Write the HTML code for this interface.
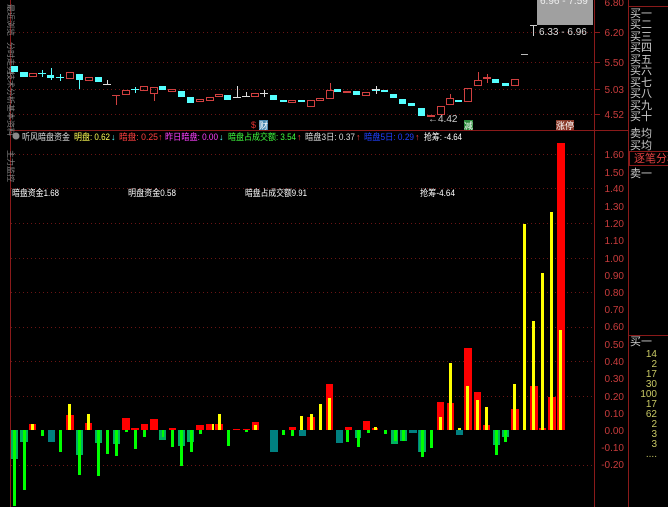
<!DOCTYPE html>
<html><head><meta charset="utf-8"><style>
html,body{margin:0;padding:0;background:#000;width:668px;height:507px;overflow:hidden}
svg{display:block}
text{font-family:"Liberation Sans","Noto Sans CJK SC",sans-serif;font-size:10px}
</style></head><body>
<svg width="668" height="507" xmlns="http://www.w3.org/2000/svg">
<rect width="668" height="507" fill="#000"/>
<g stroke="#8a1a1a" stroke-width="1">
<line x1="10.5" y1="0" x2="10.5" y2="507"/>
<line x1="594.5" y1="0" x2="594.5" y2="507"/>
<line x1="628.5" y1="0" x2="628.5" y2="507"/>
<line x1="10" y1="130.5" x2="628" y2="130.5"/>
<line x1="628" y1="6.5" x2="668" y2="6.5"/>
<line x1="628" y1="335.5" x2="668" y2="335.5"/>
</g>
<g stroke="#6a1515" stroke-width="1" stroke-dasharray="1,3">
<line x1="11" y1="32.5" x2="594" y2="32.5"/>
<line x1="11" y1="62.5" x2="594" y2="62.5"/>
<line x1="11" y1="89.5" x2="594" y2="89.5"/>
<line x1="11" y1="114.5" x2="594" y2="114.5"/>
<line x1="11" y1="154.5" x2="594" y2="154.5"/>
<line x1="11" y1="188.5" x2="594" y2="188.5"/>
<line x1="11" y1="223.5" x2="594" y2="223.5"/>
<line x1="11" y1="258.5" x2="594" y2="258.5"/>
<line x1="11" y1="292.5" x2="594" y2="292.5"/>
<line x1="11" y1="327.5" x2="594" y2="327.5"/>
<line x1="11" y1="361.5" x2="594" y2="361.5"/>
<line x1="11" y1="396.5" x2="594" y2="396.5"/>
<line x1="11" y1="465.5" x2="594" y2="465.5"/>
</g>
<g stroke="#8a1a1a"><line x1="594" y1="32.5" x2="600" y2="32.5"/><line x1="594" y1="62.5" x2="600" y2="62.5"/><line x1="594" y1="89.5" x2="600" y2="89.5"/><line x1="594" y1="114.5" x2="600" y2="114.5"/></g>
<g fill="#888">
<text transform="translate(8,4) rotate(90)" style="font-size:8px">最近浏览</text>
<text transform="translate(8,42) rotate(90)" style="font-size:8px">分时走势</text>
<text transform="translate(8,72) rotate(90)" style="font-size:8px">技术分析</text>
<text transform="translate(8,104) rotate(90)" style="font-size:8px">基本资料</text>
<text transform="translate(8,150) rotate(90)" style="font-size:8px">主力监控</text>
</g>
<g fill="#c83c3c" text-anchor="end">
<text x="624" y="6">6.80</text>
<text x="624" y="36">6.20</text>
<text x="624" y="66">5.50</text>
<text x="624" y="93">5.03</text>
<text x="624" y="118">4.52</text>
<text x="624" y="158">1.60</text>
<text x="624" y="176">1.50</text>
<text x="624" y="192">1.40</text>
<text x="624" y="210">1.30</text>
<text x="624" y="227">1.20</text>
<text x="624" y="244">1.10</text>
<text x="624" y="262">1.00</text>
<text x="624" y="279">0.90</text>
<text x="624" y="296">0.80</text>
<text x="624" y="313">0.70</text>
<text x="624" y="330">0.60</text>
<text x="624" y="348">0.50</text>
<text x="624" y="365">0.40</text>
<text x="624" y="382">0.30</text>
<text x="624" y="400">0.20</text>
<text x="624" y="417">0.10</text>
<text x="624" y="434">0.00</text>
<text x="624" y="451">-0.10</text>
<text x="624" y="468">-0.20</text>
</g>
<rect x="537" y="0" width="56" height="25" fill="#a0a0a0"/>
<text x="540" y="4" fill="#eee">6.96 - 7.59</text>
<line x1="533.5" y1="25" x2="533.5" y2="36" stroke="#ccc"/>
<line x1="530" y1="25.5" x2="537" y2="25.5" stroke="#ccc"/>
<text x="539" y="35" fill="#ddd">6.33 - 6.96</text>
<line x1="521" y1="54.5" x2="528" y2="54.5" stroke="#bbb"/>
<g fill="#55ffff">
<rect x="11" y="66" width="7" height="6"/><rect x="20" y="72" width="8" height="5"/><rect x="47" y="75" width="7" height="3"/>
<rect x="76" y="74" width="7" height="6"/><rect x="95" y="77" width="7" height="5"/><rect x="159" y="86" width="7" height="4"/>
<rect x="178" y="91" width="7" height="6"/><rect x="187" y="97" width="7" height="6"/><rect x="224" y="95" width="7" height="5"/>
<rect x="270" y="95" width="7" height="5"/><rect x="280" y="100" width="7" height="2"/><rect x="298" y="100" width="7" height="2"/>
<rect x="334" y="89" width="7" height="3"/><rect x="353" y="91" width="7" height="4"/><rect x="381" y="90" width="7" height="2"/>
<rect x="390" y="94" width="7" height="4"/><rect x="399" y="99" width="7" height="5"/><rect x="408" y="103" width="7" height="3"/>
<rect x="418" y="108" width="7" height="8"/><rect x="455" y="100" width="7" height="2"/><rect x="492" y="79" width="7" height="4"/><rect x="502" y="83" width="7" height="3"/>
</g>
<g stroke="#55ffff" stroke-width="1">
<line x1="51.5" y1="68" x2="51.5" y2="80"/><line x1="79.5" y1="80" x2="79.5" y2="89"/>
<line x1="38" y1="73.5" x2="46" y2="73.5"/><line x1="42.5" y1="70" x2="42.5" y2="77"/>
<line x1="56" y1="77.5" x2="64" y2="77.5"/><line x1="60.5" y1="74" x2="60.5" y2="81"/>
<line x1="131" y1="89.5" x2="139" y2="89.5"/><line x1="135.5" y1="87" x2="135.5" y2="93"/>
<line x1="372" y1="90.5" x2="380" y2="90.5"/>
</g>
<g stroke="#ddd" stroke-width="1">
<line x1="103" y1="84.5" x2="111" y2="84.5"/><line x1="107.5" y1="80" x2="107.5" y2="84"/>
<line x1="233" y1="97.5" x2="241" y2="97.5"/><line x1="237.5" y1="86" x2="237.5" y2="97"/>
<line x1="242" y1="96.5" x2="250" y2="96.5"/><line x1="246.5" y1="92" x2="246.5" y2="96"/>
<line x1="260" y1="93.5" x2="268" y2="93.5"/><line x1="264.5" y1="90" x2="264.5" y2="97"/>
<line x1="372" y1="89.5" x2="380" y2="89.5"/><line x1="376.5" y1="86" x2="376.5" y2="94"/>
</g>
<g fill="none" stroke="#d04040" stroke-width="1">
<rect x="29.5" y="73.5" width="7" height="3"/><rect x="66.5" y="72.5" width="7" height="6"/><rect x="85.5" y="77.5" width="7" height="3"/>
<rect x="122.5" y="90.5" width="7" height="4"/><rect x="140.5" y="86.5" width="7" height="4"/><rect x="150.5" y="87.5" width="7" height="6"/>
<rect x="168.5" y="89.5" width="7" height="2"/><rect x="196.5" y="99.5" width="7" height="2"/><rect x="206.5" y="97.5" width="7" height="3"/>
<rect x="215.5" y="94.5" width="7" height="2"/><rect x="251.5" y="93.5" width="7" height="3"/><rect x="288.5" y="100.5" width="7" height="2"/>
<rect x="307.5" y="100.5" width="7" height="6"/><rect x="316.5" y="98.5" width="7" height="2"/><rect x="326.5" y="90.5" width="7" height="8"/>
<rect x="343.5" y="91.5" width="7" height="1"/><rect x="362.5" y="92.5" width="7" height="3"/><rect x="427.5" y="115.5" width="7" height="1"/>
<rect x="437.5" y="106.5" width="7" height="8"/><rect x="446.5" y="98.5" width="7" height="6"/><rect x="464.5" y="88.5" width="7" height="13"/>
<rect x="474.5" y="80.5" width="7" height="5"/><rect x="483.5" y="77.5" width="7" height="1"/><rect x="511.5" y="79.5" width="7" height="6"/>
<line x1="112" y1="95.5" x2="120" y2="95.5"/><line x1="116.5" y1="95" x2="116.5" y2="105"/>
<line x1="154.5" y1="94" x2="154.5" y2="101"/><line x1="330.5" y1="83" x2="330.5" y2="90"/>
<line x1="450.5" y1="94" x2="450.5" y2="98"/><line x1="478.5" y1="72" x2="478.5" y2="80"/><line x1="487.5" y1="74" x2="487.5" y2="83"/>
</g>
<text x="428" y="122" fill="#ccc">←4.42</text>
<text x="251" y="128" fill="#e03030" style="font-size:9px">$</text>
<rect x="259" y="120" width="9" height="10" fill="#4a8ab0"/><text x="259" y="129" fill="#fff" style="font-size:9px">财</text>
<rect x="464" y="120" width="9" height="10" fill="#2a8a3a"/><text x="464" y="129" fill="#fff" style="font-size:9px">减</text>
<rect x="556" y="120" width="18" height="10" fill="#8a3a2a"/><text x="556" y="129" fill="#fff" style="font-size:9px">涨停</text>
<!-- indicator header -->
<circle cx="16" cy="136" r="3.5" fill="#888"/>
<g style="font-size:9px">
<text x="22" y="140" fill="#ddd" textLength="48" lengthAdjust="spacingAndGlyphs" style="font-size:9px">听风暗盘资金</text>
<text x="74" y="140" fill="#ffff55" textLength="36" lengthAdjust="spacingAndGlyphs" style="font-size:9px">明盘: 0.62</text><text x="111" y="140" fill="#55ffff" style="font-size:9px">↓</text>
<text x="119" y="140" fill="#ff4040" textLength="39" lengthAdjust="spacingAndGlyphs" style="font-size:9px">暗盘: 0.25</text><text x="158" y="140" fill="#ff4040" style="font-size:9px">↑</text>
<text x="165" y="140" fill="#ff40ff" textLength="53" lengthAdjust="spacingAndGlyphs" style="font-size:9px">昨日暗盘: 0.00</text><text x="219" y="140" fill="#55ffff" style="font-size:9px">↓</text>
<text x="228" y="140" fill="#40ff40" textLength="68" lengthAdjust="spacingAndGlyphs" style="font-size:9px">暗盘占成交额: 3.54</text><text x="297" y="140" fill="#ff4040" style="font-size:9px">↑</text>
<text x="305" y="140" fill="#ddd" textLength="50" lengthAdjust="spacingAndGlyphs" style="font-size:9px">暗盘3日: 0.37</text><text x="356" y="140" fill="#ff4040" style="font-size:9px">↑</text>
<text x="364" y="140" fill="#2040ff" textLength="50" lengthAdjust="spacingAndGlyphs" style="font-size:9px">暗盘5日: 0.29</text><text x="415" y="140" fill="#ff4040" style="font-size:9px">↑</text>
<text x="424" y="140" fill="#fff" textLength="38" lengthAdjust="spacingAndGlyphs" style="font-size:9px">抢筹: -4.64</text>
</g>
<g fill="#fff">
<text x="12" y="196" textLength="47" lengthAdjust="spacingAndGlyphs" style="font-size:9px">暗盘资金1.68</text>
<text x="128" y="196" textLength="48" lengthAdjust="spacingAndGlyphs" style="font-size:9px">明盘资金0.58</text>
<text x="245" y="196" textLength="62" lengthAdjust="spacingAndGlyphs" style="font-size:9px">暗盘占成交额9.91</text>
<text x="420" y="196" textLength="35" lengthAdjust="spacingAndGlyphs" style="font-size:9px">抢筹-4.64</text>
</g>
<g fill="#ff0000">
<rect x="29" y="424" width="7" height="6"/><rect x="66" y="415" width="8" height="15"/><rect x="85" y="423" width="7" height="7"/>
<rect x="122" y="418" width="8" height="12"/><rect x="131" y="428" width="8" height="2"/><rect x="141" y="424" width="7" height="6"/><rect x="150" y="419" width="8" height="11"/>
<rect x="169" y="428" width="7" height="2"/><rect x="196" y="425" width="8" height="5"/><rect x="206" y="424" width="7" height="6"/><rect x="215" y="424" width="8" height="6"/>
<rect x="233" y="429" width="7" height="1"/><rect x="243" y="429" width="7" height="1"/><rect x="252" y="422" width="7" height="8"/>
<rect x="289" y="427" width="7" height="3"/><rect x="307" y="417" width="8" height="13"/><rect x="326" y="384" width="7" height="46"/>
<rect x="345" y="427" width="7" height="3"/><rect x="363" y="421" width="7" height="9"/><rect x="372" y="428" width="6" height="2"/>
<rect x="437" y="402" width="7" height="28"/><rect x="447" y="403" width="7" height="27"/><rect x="464" y="348" width="8" height="82"/>
<rect x="474" y="392" width="7" height="38"/><rect x="483" y="425" width="7" height="5"/><rect x="511" y="409" width="8" height="21"/>
<rect x="530" y="386" width="8" height="44"/><rect x="539" y="428" width="7" height="2"/><rect x="548" y="397" width="8" height="33"/><rect x="557" y="143" width="8" height="287"/>
</g>
<g fill="#ffff00">
<rect x="31" y="424" width="3" height="6"/><rect x="68" y="404" width="3" height="26"/><rect x="87" y="414" width="3" height="16"/>
<rect x="212" y="424" width="2" height="6"/><rect x="218" y="414" width="3" height="16"/><rect x="254" y="425" width="3" height="5"/>
<rect x="300" y="416" width="3" height="14"/><rect x="310" y="414" width="3" height="16"/><rect x="319" y="404" width="3" height="26"/>
<rect x="328" y="398" width="3" height="32"/><rect x="374" y="427" width="3" height="3"/>
<rect x="439" y="417" width="3" height="13"/><rect x="449" y="363" width="3" height="67"/><rect x="458" y="428" width="3" height="2"/>
<rect x="466" y="386" width="3" height="44"/><rect x="476" y="400" width="3" height="30"/><rect x="485" y="407" width="3" height="23"/>
<rect x="513" y="384" width="3" height="46"/><rect x="523" y="224" width="3" height="206"/><rect x="532" y="321" width="3" height="109"/>
<rect x="541" y="273" width="3" height="157"/><rect x="550" y="212" width="3" height="218"/><rect x="559" y="330" width="3" height="100"/>
</g>
<g fill="#008080">
<rect x="48" y="430" width="7" height="12"/><rect x="270" y="430" width="8" height="22"/><rect x="299" y="430" width="7" height="6"/>
<rect x="336" y="430" width="7" height="13"/><rect x="409" y="430" width="8" height="3"/><rect x="418" y="430" width="2" height="22"/>
<rect x="456" y="430" width="7" height="5"/>
</g>
<g fill="#00b060">
<rect x="11" y="430" width="7" height="29"/><rect x="20" y="430" width="8" height="12"/><rect x="76" y="430" width="7" height="25"/>
<rect x="95" y="430" width="7" height="13"/><rect x="113" y="430" width="7" height="14"/><rect x="159" y="430" width="7" height="10"/>
<rect x="178" y="430" width="7" height="16"/><rect x="187" y="430" width="7" height="12"/><rect x="355" y="430" width="6" height="8"/>
<rect x="391" y="430" width="7" height="14"/><rect x="400" y="430" width="7" height="11"/><rect x="419" y="430" width="7" height="22"/>
<rect x="493" y="430" width="7" height="15"/><rect x="502" y="430" width="7" height="7"/>
</g>
<g fill="#00ff00">
<rect x="13" y="430" width="3" height="76"/><rect x="23" y="430" width="3" height="60"/><rect x="41" y="430" width="3" height="6"/>
<rect x="59" y="430" width="3" height="22"/><rect x="78" y="430" width="3" height="45"/><rect x="97" y="430" width="3" height="46"/>
<rect x="106" y="430" width="3" height="24"/><rect x="115" y="430" width="3" height="26"/><rect x="125" y="430" width="3" height="2"/>
<rect x="134" y="430" width="3" height="19"/><rect x="143" y="430" width="3" height="7"/><rect x="162" y="430" width="2" height="7"/>
<rect x="171" y="430" width="3" height="17"/><rect x="180" y="430" width="3" height="36"/><rect x="190" y="430" width="3" height="22"/>
<rect x="199" y="430" width="3" height="4"/><rect x="227" y="430" width="3" height="16"/><rect x="245" y="430" width="3" height="2"/>
<rect x="282" y="430" width="3" height="5"/><rect x="291" y="430" width="3" height="6"/><rect x="346" y="430" width="3" height="12"/>
<rect x="357" y="430" width="3" height="17"/><rect x="367" y="430" width="3" height="3"/><rect x="384" y="430" width="3" height="4"/>
<rect x="394" y="430" width="3" height="11"/><rect x="402" y="430" width="3" height="11"/><rect x="421" y="430" width="3" height="27"/>
<rect x="430" y="430" width="3" height="18"/><rect x="495" y="430" width="3" height="25"/><rect x="504" y="430" width="3" height="12"/>
</g>
<g fill="#ccc">
<text x="630" y="17" style="font-size:11px">买一</text><text x="630" y="28" style="font-size:11px">买二</text><text x="630" y="40" style="font-size:11px">买三</text>
<text x="630" y="51" style="font-size:11px">买四</text><text x="630" y="63" style="font-size:11px">买五</text><text x="630" y="74" style="font-size:11px">买六</text>
<text x="630" y="86" style="font-size:11px">买七</text><text x="630" y="97" style="font-size:11px">买八</text><text x="630" y="109" style="font-size:11px">买九</text>
<text x="630" y="120" style="font-size:11px">买十</text><text x="630" y="137" style="font-size:11px">卖均</text><text x="630" y="149" style="font-size:11px">买均</text>
<text x="630" y="177" style="font-size:11px">卖一</text><text x="630" y="345" style="font-size:11px">买一</text>
</g>
<rect x="629.5" y="151.5" width="40" height="14" fill="none" stroke="#8a1a1a"/>
<text x="634" y="162" fill="#e04040" style="font-size:11px">逐笔分析</text>
<g fill="#c8c864" text-anchor="end">
<text x="657" y="357">14</text><text x="657" y="367">2</text><text x="657" y="377">17</text><text x="657" y="387">30</text>
<text x="657" y="397">100</text><text x="657" y="407">17</text><text x="657" y="417">62</text><text x="657" y="427">2</text>
<text x="657" y="437">3</text><text x="657" y="447">3</text><text x="657" y="457">....</text>
</g>
</svg>
</body></html>
